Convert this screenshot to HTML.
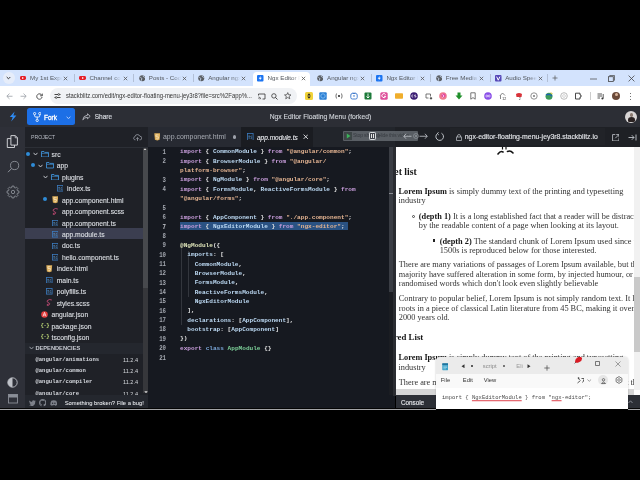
<!DOCTYPE html>
<html><head><meta charset="utf-8"><style>
*{box-sizing:border-box;margin:0;padding:0}
html,body{width:640px;height:480px;overflow:hidden;background:#000;font-family:"Liberation Sans",sans-serif}
.a{position:absolute}
.t{white-space:nowrap;line-height:1}
.tabt{top:75px;font-size:6.2px;color:#50555b;white-space:nowrap;line-height:1;width:32px;overflow:hidden;-webkit-mask-image:linear-gradient(90deg,#000 75%,transparent 100%)}
.tabx{top:74.5px;font-size:6px;color:#444;line-height:1}
.tabsep{top:74px;width:1px;height:8px;background:#a8b6cf}
.ext{top:93px;width:6px;height:6px;border-radius:1.5px}
.m{font-family:"Liberation Mono",monospace}
.cl{font-family:"Liberation Mono",monospace;font-size:6.1px;line-height:9.35px;height:9.35px;white-space:pre;color:#d4d4d4;font-weight:bold}
.ln{font-family:"Liberation Mono",monospace;font-size:5.7px;line-height:9.35px;height:9.35px;color:#a9adb5;font-weight:bold;transform:scaleY(1.25);transform-origin:0 50%;text-align:right;width:20px}
.k{color:#c89ddb}.i{color:#bcd9f3}.s{color:#e3b391}.d{color:#dde3b8}.g{color:#7ccf98}.b{color:#7aa6d8}.w{color:#e0e0e0}
.ft{font-size:6.9px;color:#c9ccd3;line-height:1}
.pv{font-family:"Liberation Serif",serif;font-size:8.3px;line-height:9.35px;color:#333;white-space:nowrap}
.pv b{color:#161616}
</style></head><body>
<div id="root" style="position:absolute;left:0;top:0;width:640px;height:480px;will-change:transform"><div class="a" style="left:0px;top:70px;width:640px;height:16.4px;background:#d3e3fd;"></div>
<div class="a" style="left:0px;top:86.4px;width:640px;height:19.6px;background:#ffffff;"></div>
<div class="a" style="left:2.5px;top:72px;width:12px;height:12px;background:#e6edfa;border-radius:50%"></div>
<svg class="a" style="left:6px;top:76px" width="5" height="4" viewBox="0 0 5 4"><path d="M0.7 1 L2.5 2.8 L4.3 1" stroke="#333" stroke-width="1" fill="none"/></svg>
<div class="a" style="left:19.8px;top:75.8px;width:6.6px;height:4.6px;background:#e5202a;border-radius:1.4px"></div>
<div class="a" style="left:22.3px;top:77px;width:0;height:0;border-left:2.2px solid #fff;border-top:1.1px solid transparent;border-bottom:1.1px solid transparent"></div>
<div class="a tabt" style="left:30.0px">My 1st Experi</div>
<svg class="a" style="left:63.2px;top:75.5px" width="5" height="5" viewBox="0 0 5 5"><path d="M0.8 0.8 L4.2 4.2 M4.2 0.8 L0.8 4.2" stroke="#555" stroke-width="0.8"/></svg>
<div class="a" style="left:73.9px;top:74px;width:0.7px;height:8px;background:#b3c0d6;"></div>
<div class="a" style="left:79.2px;top:75.8px;width:6.6px;height:4.6px;background:#e5202a;border-radius:1.4px"></div>
<div class="a" style="left:81.7px;top:77px;width:0;height:0;border-left:2.2px solid #fff;border-top:1.1px solid transparent;border-bottom:1.1px solid transparent"></div>
<div class="a tabt" style="left:89.4px">Channel cont</div>
<svg class="a" style="left:122.6px;top:75.5px" width="5" height="5" viewBox="0 0 5 5"><path d="M0.8 0.8 L4.2 4.2 M4.2 0.8 L0.8 4.2" stroke="#555" stroke-width="0.8"/></svg>
<div class="a" style="left:133.3px;top:74px;width:0.7px;height:8px;background:#b3c0d6;"></div>
<svg class="a" style="left:138.6px;top:75px" width="6.5" height="6.5" viewBox="0 0 10 10"><circle cx="5" cy="5" r="4.6" fill="#5a5e63"/><path d="M2 3.5 Q4 4 4.5 6 Q3 8 3.5 9" stroke="#d3e3fd" stroke-width="1.2" fill="none"/><path d="M6 1.5 Q7 3 8.8 4" stroke="#d3e3fd" stroke-width="1.2" fill="none"/></svg>
<div class="a tabt" style="left:148.8px">Posts - Codin</div>
<svg class="a" style="left:182.0px;top:75.5px" width="5" height="5" viewBox="0 0 5 5"><path d="M0.8 0.8 L4.2 4.2 M4.2 0.8 L0.8 4.2" stroke="#555" stroke-width="0.8"/></svg>
<div class="a" style="left:192.7px;top:74px;width:0.7px;height:8px;background:#b3c0d6;"></div>
<svg class="a" style="left:198.0px;top:75px" width="6.5" height="6.5" viewBox="0 0 10 10"><circle cx="5" cy="5" r="4.6" fill="#5a5e63"/><path d="M2 3.5 Q4 4 4.5 6 Q3 8 3.5 9" stroke="#d3e3fd" stroke-width="1.2" fill="none"/><path d="M6 1.5 Q7 3 8.8 4" stroke="#d3e3fd" stroke-width="1.2" fill="none"/></svg>
<div class="a tabt" style="left:208.2px">Angular ngx-</div>
<svg class="a" style="left:241.4px;top:75.5px" width="5" height="5" viewBox="0 0 5 5"><path d="M0.8 0.8 L4.2 4.2 M4.2 0.8 L0.8 4.2" stroke="#555" stroke-width="0.8"/></svg>
<div class="a" style="left:252.5px;top:72.4px;width:57.5px;height:14.2px;background:#fff;border-radius:4px 4px 0 0"></div>
<svg class="a" style="left:257.4px;top:75px" width="6.5" height="6.5" viewBox="0 0 10 10"><rect width="10" height="10" rx="1.5" fill="#1b74f2"/><path d="M5.8 1.5 L2.5 5.8 H4.8 L4 8.5 L7.5 4.2 H5.2 Z" fill="#fff"/></svg>
<div class="a tabt" style="left:267.6px">Ngx Editor Fl</div>
<svg class="a" style="left:300.8px;top:75.5px" width="5" height="5" viewBox="0 0 5 5"><path d="M0.8 0.8 L4.2 4.2 M4.2 0.8 L0.8 4.2" stroke="#555" stroke-width="0.8"/></svg>
<svg class="a" style="left:316.8px;top:75px" width="6.5" height="6.5" viewBox="0 0 10 10"><circle cx="5" cy="5" r="4.6" fill="#5a5e63"/><path d="M2 3.5 Q4 4 4.5 6 Q3 8 3.5 9" stroke="#d3e3fd" stroke-width="1.2" fill="none"/><path d="M6 1.5 Q7 3 8.8 4" stroke="#d3e3fd" stroke-width="1.2" fill="none"/></svg>
<div class="a tabt" style="left:327.0px">Angular ngx-</div>
<svg class="a" style="left:360.2px;top:75.5px" width="5" height="5" viewBox="0 0 5 5"><path d="M0.8 0.8 L4.2 4.2 M4.2 0.8 L0.8 4.2" stroke="#555" stroke-width="0.8"/></svg>
<div class="a" style="left:370.9px;top:74px;width:0.7px;height:8px;background:#b3c0d6;"></div>
<svg class="a" style="left:376.2px;top:75px" width="6.5" height="6.5" viewBox="0 0 10 10"><rect width="10" height="10" rx="1.5" fill="#1b74f2"/><path d="M5.8 1.5 L2.5 5.8 H4.8 L4 8.5 L7.5 4.2 H5.2 Z" fill="#fff"/></svg>
<div class="a tabt" style="left:386.4px">Ngx Editor Fl</div>
<svg class="a" style="left:419.6px;top:75.5px" width="5" height="5" viewBox="0 0 5 5"><path d="M0.8 0.8 L4.2 4.2 M4.2 0.8 L0.8 4.2" stroke="#555" stroke-width="0.8"/></svg>
<div class="a" style="left:430.3px;top:74px;width:0.7px;height:8px;background:#b3c0d6;"></div>
<svg class="a" style="left:435.6px;top:75px" width="6.5" height="6.5" viewBox="0 0 10 10"><circle cx="5" cy="5" r="4.6" fill="#5a5e63"/><path d="M2 3.5 Q4 4 4.5 6 Q3 8 3.5 9" stroke="#d3e3fd" stroke-width="1.2" fill="none"/><path d="M6 1.5 Q7 3 8.8 4" stroke="#d3e3fd" stroke-width="1.2" fill="none"/></svg>
<div class="a tabt" style="left:445.8px">Free Media T</div>
<svg class="a" style="left:479.0px;top:75.5px" width="5" height="5" viewBox="0 0 5 5"><path d="M0.8 0.8 L4.2 4.2 M4.2 0.8 L0.8 4.2" stroke="#555" stroke-width="0.8"/></svg>
<div class="a" style="left:489.7px;top:74px;width:0.7px;height:8px;background:#b3c0d6;"></div>
<svg class="a" style="left:495.0px;top:75px" width="6.5" height="6.5" viewBox="0 0 10 10"><rect width="10" height="10" rx="1.5" fill="#5547b8"/><path d="M2.5 2.5 L5 8 L7.5 2.5" stroke="#fff" stroke-width="1.5" fill="none"/></svg>
<div class="a tabt" style="left:505.2px">Audio Speec</div>
<svg class="a" style="left:538.4px;top:75.5px" width="5" height="5" viewBox="0 0 5 5"><path d="M0.8 0.8 L4.2 4.2 M4.2 0.8 L0.8 4.2" stroke="#555" stroke-width="0.8"/></svg>
<div class="a" style="left:547px;top:74px;width:0.7px;height:8px;background:#b3c0d6;"></div>
<svg class="a" style="left:552px;top:75px" width="6" height="6" viewBox="0 0 6 6"><path d="M3 0.5 V5.5 M0.5 3 H5.5" stroke="#555" stroke-width="0.7"/></svg>
<svg class="a" style="left:590px;top:77.5px" width="7" height="2" viewBox="0 0 7 2"><path d="M0 1 H7" stroke="#555" stroke-width="0.8"/></svg>
<svg class="a" style="left:608px;top:74.5px" width="7" height="7" viewBox="0 0 7 7"><rect x="0.5" y="1.7" width="4.8" height="4.8" stroke="#444" stroke-width="0.8" fill="none"/><path d="M1.7 1.2 V0.5 H6.5 V5.3 H5.8" stroke="#444" stroke-width="0.7" fill="none"/></svg>
<svg class="a" style="left:627.5px;top:74.5px" width="7" height="7" viewBox="0 0 7 7"><path d="M0.6 0.6 L6.4 6.4 M6.4 0.6 L0.6 6.4" stroke="#444" stroke-width="0.8"/></svg>
<svg class="a" style="left:5.5px;top:93px" width="7" height="6.5" viewBox="0 0 7 6.5"><path d="M6.5 3.25 H1 M3.5 0.6 L0.8 3.25 L3.5 5.9" stroke="#9aa0a6" stroke-width="0.8" fill="none"/></svg>
<svg class="a" style="left:20px;top:93px" width="7" height="6.5" viewBox="0 0 7 6.5"><path d="M0.5 3.25 H6 M3.5 0.6 L6.2 3.25 L3.5 5.9" stroke="#9aa0a6" stroke-width="0.8" fill="none"/></svg>
<svg class="a" style="left:35.5px;top:92.6px" width="7" height="7" viewBox="0 0 7 7"><path d="M5.9 2.4 A2.7 2.7 0 1 0 6.1 4" stroke="#444" stroke-width="0.9" fill="none"/><path d="M6.3 0.6 V2.8 H4.1" stroke="#444" stroke-width="0.9" fill="none"/></svg>
<div class="a" style="left:50px;top:88.2px;width:246.5px;height:15.8px;background:#f0f2f5;border-radius:8px"></div>
<svg class="a" style="left:53.5px;top:93px" width="7" height="6" viewBox="0 0 7 6"><path d="M0.5 1.5 H4 M5.5 1.5 H6.5 M0.5 4.5 H1.5 M3 4.5 H6.5" stroke="#333" stroke-width="0.9"/><circle cx="4.7" cy="1.5" r="0.9" fill="none" stroke="#333" stroke-width="0.7"/><circle cx="2.2" cy="4.5" r="0.9" fill="none" stroke="#333" stroke-width="0.7"/></svg>
<div class="a t" style="left:65.6px;top:93.2px;font-size:6.6px;color:#333;transform:scale(0.894,1.055);transform-origin:0 50%">stackblitz.com/edit/ngx-editor-floating-menu-jey3r8?file=src%2Fapp%...</div>
<svg class="a" style="left:257.5px;top:92.5px" width="8" height="7" viewBox="0 0 8 7"><path d="M0.5 2.5 V1 H7 V6 H4.5" stroke="#333" stroke-width="0.8" fill="none"/><path d="M0.5 4 A2.2 2.2 0 0 1 2.7 6.2 M0.5 5.3 A0.9 0.9 0 0 1 1.4 6.2" stroke="#333" stroke-width="0.7" fill="none"/></svg>
<svg class="a" style="left:270.5px;top:92.5px" width="7" height="7" viewBox="0 0 7 7"><circle cx="2.9" cy="2.9" r="2.2" stroke="#333" stroke-width="0.8" fill="none"/><path d="M4.5 4.5 L6.5 6.5" stroke="#333" stroke-width="0.9"/></svg>
<svg class="a" style="left:284px;top:92.2px" width="7.5" height="7.5" viewBox="0 0 10 10"><path d="M5 0.8 L6.2 3.7 L9.3 3.9 L6.9 5.9 L7.7 9 L5 7.3 L2.3 9 L3.1 5.9 L0.7 3.9 L3.8 3.7 Z" stroke="#333" stroke-width="0.9" fill="none"/></svg>
<svg class="a" style="left:304.5px;top:92.2px" width="8" height="8" viewBox="0 0 8 8"><rect x="0" y="0" width="8" height="8" rx="1.5" fill="#f1d33a"/><path d="M4 1.2 L5.8 3.4 H2.2 Z M4 6.8 L5.8 4.6 H2.2 Z" fill="#222"/></svg>
<svg class="a" style="left:319.3px;top:92.2px" width="8" height="8" viewBox="0 0 8 8"><rect x="0.3" y="0.3" width="7.4" height="7.4" rx="1" fill="#2b7fd4"/><circle cx="4" cy="4" r="2.2" fill="none" stroke="#8cc4f5" stroke-width="0.8"/></svg>
<svg class="a" style="left:334.5px;top:92.2px" width="8" height="8" viewBox="0 0 8 8"><path d="M1.5 1.5 Q0.3 4 1.5 6.5 M6.5 1.5 Q7.7 4 6.5 6.5" stroke="#666" stroke-width="0.9" fill="none"/><rect x="3" y="3" width="2" height="2" fill="#555"/></svg>
<svg class="a" style="left:349.5px;top:92.2px" width="8" height="8" viewBox="0 0 8 8"><rect x="0.8" y="1.5" width="6.4" height="5.5" rx="1.5" fill="none" stroke="#3574c9" stroke-width="0.9"/><path d="M2.5 0.3 L4 1.5 L5.5 0.3" stroke="#3574c9" stroke-width="0.7" fill="none"/><path d="M2.8 3.4 L4 5 L5.2 3.4 Z" fill="#3574c9"/></svg>
<svg class="a" style="left:364.2px;top:92.2px" width="8" height="8" viewBox="0 0 8 8"><rect x="0.5" y="0.5" width="7" height="7" rx="1" fill="#1d7a3a"/><path d="M4 1.5 V6 M2.5 4.5 L4 6 L5.5 4.5" stroke="#fff" stroke-width="0.9" fill="none"/></svg>
<svg class="a" style="left:379.5px;top:92.2px" width="8" height="8" viewBox="0 0 8 8"><rect x="0.3" y="0.3" width="7.4" height="7.4" rx="1.5" fill="#de4f9a"/><path d="M5.6 2.6 A2 2 0 1 0 5.8 4.3 H4" stroke="#fff" stroke-width="1" fill="none"/></svg>
<svg class="a" style="left:395.0px;top:92.2px" width="8" height="8" viewBox="0 0 8 8"><rect x="0" y="1.3" width="8" height="5.4" rx="0.8" fill="#f0ae2c"/></svg>
<svg class="a" style="left:409.5px;top:92.2px" width="8" height="8" viewBox="0 0 8 8"><circle cx="4" cy="4" r="3.8" fill="#3b1d73"/><path d="M3.2 3 A1.1 1.1 0 1 0 3.2 5 M6 3 H4.6 V4 H6 V5 H4.6" stroke="#fff" stroke-width="0.6" fill="none"/></svg>
<svg class="a" style="left:424.5px;top:92.2px" width="8" height="8" viewBox="0 0 8 8"><path d="M1 2 H5.5 V4.5 M1 2 V6 H3.5" stroke="#555" stroke-width="0.8" fill="none"/><path d="M6 5 V7.5 M4.8 6.3 H7.2" stroke="#333" stroke-width="0.9"/></svg>
<svg class="a" style="left:439.0px;top:92.2px" width="8" height="8" viewBox="0 0 8 8"><circle cx="4" cy="4" r="3.8" fill="#ef7a8f"/><circle cx="4.5" cy="3.5" r="2" fill="#e24aa6"/><path d="M3.5 2.5 L5 4 L3.5 5.5" stroke="#fff" stroke-width="0.7" fill="none"/></svg>
<svg class="a" style="left:454.5px;top:92.2px" width="8" height="8" viewBox="0 0 8 8"><path d="M2.5 0.5 H5.5 V3.5 H7.5 L4 7.5 L0.5 3.5 H2.5 Z" fill="#1f8f2a"/></svg>
<svg class="a" style="left:469.0px;top:92.2px" width="8" height="8" viewBox="0 0 8 8"><path d="M1.8 0.8 H6.2 V7.2 L4 5.6 L1.8 7.2 Z" stroke="#666" stroke-width="0.9" fill="none"/></svg>
<svg class="a" style="left:484.0px;top:92.2px" width="8" height="8" viewBox="0 0 8 8"><circle cx="4" cy="4" r="3.8" fill="#8a4fe8"/><path d="M1.8 4 A1 1 0 1 0 3.8 4 A1 1 0 1 0 1.8 4 M4.2 4 A1 1 0 1 0 6.2 4 A1 1 0 1 0 4.2 4" stroke="#fff" stroke-width="0.6" fill="none"/></svg>
<svg class="a" style="left:499.0px;top:92.2px" width="8" height="8" viewBox="0 0 8 8"><path d="M0.8 4 L3.5 1 L6 3.5 M1.5 3.5 V7" stroke="#666" stroke-width="0.8" fill="none"/><text x="3.3" y="7.8" font-size="3.6" fill="#333" font-family="Liberation Sans">12</text></svg>
<svg class="a" style="left:515.0px;top:92.2px" width="8" height="8" viewBox="0 0 8 8"><path d="M1 2 Q4 0 7 2 L6.5 5 H1.5 Z" fill="#d8333a"/><text x="3.8" y="8" font-size="3.6" fill="#333" font-family="Liberation Sans">2</text></svg>
<svg class="a" style="left:530.0px;top:92.2px" width="8" height="8" viewBox="0 0 8 8"><circle cx="4" cy="4" r="3.2" stroke="#777" stroke-width="0.8" fill="none"/><circle cx="4" cy="4" r="1" fill="#777"/></svg>
<svg class="a" style="left:545.0px;top:92.2px" width="8" height="8" viewBox="0 0 8 8"><circle cx="4" cy="4.3" r="3.5" fill="#3c9a5a"/><path d="M1 3 Q4 1.5 7 4" stroke="#1f5fb8" stroke-width="1.3" fill="none"/><path d="M5.5 0.8 L7.5 1.5" stroke="#e8c33a" stroke-width="1"/></svg>
<svg class="a" style="left:560.0px;top:92.2px" width="8" height="8" viewBox="0 0 8 8"><circle cx="4" cy="4" r="3.3" stroke="#aaa" stroke-width="0.8" fill="none"/><circle cx="4" cy="4" r="1.4" stroke="#bbb" stroke-width="0.6" fill="none"/></svg>
<svg class="a" style="left:574.0px;top:92.2px" width="8" height="8" viewBox="0 0 8 8"><path d="M1.5 1.2 H6 V3 H7 V5 H6 V7 H1.5 Z" stroke="#333" stroke-width="0.9" fill="none"/></svg>
<div class="a" style="left:590px;top:92px;width:0.8px;height:8px;background:#ccc;"></div>
<svg class="a" style="left:596.5px;top:92.5px" width="8" height="7" viewBox="0 0 8 7"><path d="M0.5 1 H5 M0.5 3 H5 M0.5 5 H3" stroke="#444" stroke-width="0.9"/><path d="M6.2 1 V5.5" stroke="#333" stroke-width="0.8"/><circle cx="5.4" cy="5.6" r="1" fill="#333"/></svg>
<div class="a" style="left:612px;top:91.8px;width:8px;height:8px;background:#6b4a3a;border-radius:50%"></div>
<div class="a" style="left:614.5px;top:93px;width:3px;height:3px;background:#d9b49a;border-radius:50%"></div>
<div class="a" style="left:630.3px;top:92.5px;width:1.2px;height:1.2px;background:#444;border-radius:50%"></div>
<div class="a" style="left:630.3px;top:95.5px;width:1.2px;height:1.2px;background:#444;border-radius:50%"></div>
<div class="a" style="left:630.3px;top:98.5px;width:1.2px;height:1.2px;background:#444;border-radius:50%"></div>
<div class="a" style="left:0px;top:106px;width:640px;height:20.5px;background:#2c2e35;"></div>
<svg class="a" style="left:8.6px;top:111.2px" width="8" height="11" viewBox="0 0 8 11"><path d="M5.6 0.4 L0.8 6 H3.7 L2.2 10.6 L7.4 4.6 H4.4 Z" fill="#2f8cf5"/></svg>
<div class="a" style="left:27px;top:108.3px;width:47.6px;height:16.3px;background:#1c6fe6;border-radius:2.5px"></div>
<svg class="a" style="left:32.6px;top:111.5px" width="8.4" height="10" viewBox="0 0 8.4 10"><circle cx="1.6" cy="1.6" r="1.15" stroke="#fff" stroke-width="0.85" fill="none"/><circle cx="6.8" cy="1.6" r="1.15" stroke="#fff" stroke-width="0.85" fill="none"/><circle cx="4.2" cy="8.4" r="1.15" stroke="#fff" stroke-width="0.85" fill="none"/><path d="M1.6 2.8 V3.8 Q1.6 5 2.8 5 H5.6 Q6.8 5 6.8 3.8 V2.8 M4.2 5 V7.2" stroke="#fff" stroke-width="0.85" fill="none"/></svg>
<div class="a t" style="left:44px;top:115.0px;font-size:6.5px;color:#fff;-webkit-text-stroke:0.3px #fff">Fork</div>
<svg class="a" style="left:66px;top:115.8px" width="5" height="3.5" viewBox="0 0 5 3.5"><path d="M0.6 0.8 L2.5 2.6 L4.4 0.8" stroke="#dfe9ff" stroke-width="0.8" fill="none"/></svg>
<svg class="a" style="left:81.5px;top:113.3px" width="9" height="8" viewBox="0 0 9 8"><path d="M5.5 0.8 L8.2 3.3 L5.5 5.8 V4.4 Q2.5 4.2 0.8 6.8 Q1.2 2.6 5.5 2.2 Z" stroke="#c9ccd3" stroke-width="0.8" fill="none"/></svg>
<div class="a t" style="left:94.7px;top:114.4px;font-size:6.5px;color:#d0d3d9;-webkit-text-stroke:0.2px #d0d3d9">Share</div>
<div class="a t" style="left:269.7px;top:114.2px;font-size:6.78px;color:#d5d8de;-webkit-text-stroke:0.1px #d5d8de">Ngx Editor Floating Menu (forked)</div>
<div class="a" style="left:625.3px;top:111px;width:12.2px;height:12.2px;background:#d9d6d6;border-radius:50%"></div>
<div class="a" style="left:628px;top:116.5px;width:7px;height:5.5px;background:#2a2222;border-radius:50% 50% 20% 20%"></div>
<div class="a" style="left:629.8px;top:112.5px;width:3.4px;height:4.5px;background:#8a7a70;border-radius:40%"></div>
<div class="a" style="left:0px;top:126.5px;width:25.2px;height:282px;background:#2e3038;"></div>
<svg class="a" style="left:0px;top:128px" width="24" height="24" viewBox="0 0 24 24"><path d="M10.9 7.6 H15.3 L17.4 9.7 V17.1 H10.9 Z" stroke="#dcdee2" stroke-width="0.9" fill="none"/><path d="M15.2 7.6 V9.8 H17.4" stroke="#dcdee2" stroke-width="0.7" fill="none"/><path d="M10.9 10.6 H7.3 V19.5 H14.5 V17.1" stroke="#dcdee2" stroke-width="0.9" fill="none"/></svg>
<svg class="a" style="left:6.5px;top:160px" width="13" height="13" viewBox="0 0 13 13"><circle cx="7.6" cy="5.5" r="4.1" stroke="#8f939b" stroke-width="0.9" fill="none"/><path d="M4.7 8.4 L1 12.2" stroke="#8f939b" stroke-width="1"/></svg>
<svg class="a" style="left:5.5px;top:184.5px" width="14" height="14" viewBox="0 0 14 14"><path d="M11.43 5.75 L12.91 5.95 L12.91 8.05 L11.43 8.25 L11.01 9.25 L11.92 10.43 L10.43 11.92 L9.25 11.01 L8.25 11.43 L8.05 12.91 L5.95 12.91 L5.75 11.43 L4.75 11.01 L3.57 11.92 L2.08 10.43 L2.99 9.25 L2.57 8.25 L1.09 8.05 L1.09 5.95 L2.57 5.75 L2.99 4.75 L2.08 3.57 L3.57 2.08 L4.75 2.99 L5.75 2.57 L5.95 1.09 L8.05 1.09 L8.25 2.57 L9.25 2.99 L10.43 2.08 L11.92 3.57 L11.01 4.75 Z" stroke="#8f939b" stroke-width="0.85" fill="none" stroke-linejoin="round"/><circle cx="7" cy="7" r="1.7" stroke="#8f939b" stroke-width="0.85" fill="none"/></svg>
<svg class="a" style="left:6.5px;top:377px" width="11" height="11" viewBox="0 0 11 11"><circle cx="5.5" cy="5.5" r="4.7" stroke="#bfc2c8" stroke-width="0.9" fill="none"/><path d="M5.5 0.8 A4.7 4.7 0 0 0 5.5 10.2 Z" fill="#bfc2c8"/></svg>
<svg class="a" style="left:7.5px;top:394px" width="10" height="9.5" viewBox="0 0 10 9.5"><rect x="0.5" y="0.5" width="9" height="8.5" stroke="#8a8e97" stroke-width="0.9" fill="none"/><rect x="0.5" y="0.5" width="9" height="3" fill="#8a8e97"/></svg>
<div class="a" style="left:25.2px;top:126.5px;width:122.8px;height:282px;background:#1f2127;"></div>
<div class="a t" style="left:31px;top:135.3px;font-size:5.2px;color:#b9bdc6;transform:scaleY(1.12)">PROJECT</div>
<svg class="a" style="left:133px;top:133.5px" width="9" height="7" viewBox="0 0 9 7"><path d="M2.5 5.8 H1.8 A1.6 1.6 0 0 1 1.9 2.7 A2.6 2.6 0 0 1 6.9 2.3 A1.7 1.7 0 0 1 7.2 5.8 H6.5" stroke="#9a9ea8" stroke-width="0.8" fill="none"/><path d="M4.5 6.8 V3.6 M3.3 4.8 L4.5 3.6 L5.7 4.8" stroke="#9a9ea8" stroke-width="0.8" fill="none"/></svg>
<div class="a" style="left:25.2px;top:146.6px;width:122.8px;height:0.8px;background:#2c2f36;"></div>
<div class="a" style="left:143px;top:147.5px;width:5px;height:245px;background:#36373b;"></div>
<div class="a" style="left:143px;top:150px;width:5px;height:138px;background:#47494d;"></div>
<svg class="a" style="left:143.2px;top:147.6px" width="4" height="2.5" viewBox="0 0 4 2.5"><path d="M0.3 2.2 L2 0.3 L3.7 2.2 Z" fill="#ddd"/></svg>
<svg class="a" style="left:143.5px;top:390.5px" width="4" height="2.5" viewBox="0 0 4 2.5"><path d="M0.3 0.3 L2 2.2 L3.7 0.3 Z" fill="#ddd"/></svg>
<div class="a" style="left:25.2px;top:227.8px;width:117.6px;height:11.3px;background:#3b3e50;"></div>
<div class="a" style="left:25.8px;top:151.6px;width:4px;height:4px;background:#2f8bd6;border-radius:50%"></div>
<svg class="a" style="left:32.70px;top:152.20px" width="5" height="4" viewBox="0 0 5 4"><path d="M0.5 0.8 L2.5 3 L4.5 0.8" stroke="#d0d3d8" stroke-width="0.9" fill="none"/></svg>
<svg class="a" style="left:40.70px;top:150.90px" width="8" height="6.5" viewBox="0 0 8 6.5"><path d="M0.5 0.5 H3 L3.7 1.4 H7.5 V6 H0.5 Z" stroke="#3f8fd2" stroke-width="0.9" fill="none"/><path d="M0.5 2.3 H7.5" stroke="#3f8fd2" stroke-width="0.7"/></svg>
<div class="a t" style="left:51.5px;top:151.8px;font-size:6.8px;color:#dcdfe4;-webkit-text-stroke:0.12px #dcdfe4">src</div>
<div class="a" style="left:31.0px;top:163.05px;width:4px;height:4px;background:#2f8bd6;border-radius:50%"></div>
<svg class="a" style="left:37.90px;top:163.65px" width="5" height="4" viewBox="0 0 5 4"><path d="M0.5 0.8 L2.5 3 L4.5 0.8" stroke="#d0d3d8" stroke-width="0.9" fill="none"/></svg>
<svg class="a" style="left:45.90px;top:162.35px" width="8" height="6.5" viewBox="0 0 8 6.5"><path d="M0.5 0.5 H3 L3.7 1.4 H7.5 V6 H0.5 Z" stroke="#3f8fd2" stroke-width="0.9" fill="none"/><path d="M0.5 2.3 H7.5" stroke="#3f8fd2" stroke-width="0.7"/></svg>
<div class="a t" style="left:56.7px;top:163.25px;font-size:6.8px;color:#dcdfe4;-webkit-text-stroke:0.12px #dcdfe4">app</div>
<svg class="a" style="left:43.10px;top:175.10px" width="5" height="4" viewBox="0 0 5 4"><path d="M0.5 0.8 L2.5 3 L4.5 0.8" stroke="#d0d3d8" stroke-width="0.9" fill="none"/></svg>
<svg class="a" style="left:51.10px;top:173.80px" width="8" height="6.5" viewBox="0 0 8 6.5"><path d="M0.5 0.5 H3 L3.7 1.4 H7.5 V6 H0.5 Z" stroke="#3f8fd2" stroke-width="0.9" fill="none"/><path d="M0.5 2.3 H7.5" stroke="#3f8fd2" stroke-width="0.7"/></svg>
<div class="a t" style="left:61.9px;top:174.7px;font-size:6.8px;color:#dcdfe4;-webkit-text-stroke:0.12px #dcdfe4">plugins</div>
<svg class="a" style="left:56.80px;top:185.35px" width="6.5" height="6.5" viewBox="0 0 6.5 6.5"><rect x="0.4" y="0.4" width="5.7" height="5.7" stroke="#3b7bbf" stroke-width="0.8" fill="none"/><path d="M1.3 2.6 H3 M2.15 2.6 V5.2 M5 2.8 Q4 2.2 3.8 3.1 Q3.8 3.7 4.4 3.9 Q5.2 4.3 4.3 5.1 L3.6 4.8" stroke="#5aa0e0" stroke-width="0.55" fill="none"/></svg>
<div class="a t" style="left:67.1px;top:186.15px;font-size:6.8px;color:#dcdfe4;-webkit-text-stroke:0.12px #dcdfe4">index.ts</div>
<div class="a" style="left:43.0px;top:197.4px;width:4px;height:4px;background:#2f8bd6;border-radius:50%"></div>
<svg class="a" style="left:51.60px;top:196.40px" width="6.5" height="7.5" viewBox="0 0 6.5 7.5"><path d="M0.3 0.3 H6.2 L5.6 6.4 L3.25 7.2 L0.9 6.4 Z" fill="#dcae5a"/><path d="M4.6 1.7 H1.9 L2.05 3.5 H4.4 L4.25 5.2 L3.25 5.6 L2.25 5.2" stroke="#fff4dd" stroke-width="0.6" fill="none"/></svg>
<div class="a t" style="left:61.9px;top:197.6px;font-size:6.8px;color:#dcdfe4;-webkit-text-stroke:0.12px #dcdfe4">app.component.html</div>
<svg class="a" style="left:51.60px;top:207.85px" width="6.5" height="7.5" viewBox="0 0 6.5 7.5"><path d="M5.8 1 Q3.5 -0.2 1.4 1.5 Q0.2 2.8 2.5 3.6 Q4.5 4.3 3.2 5.8 Q2.2 6.8 1 6.2 Q0.8 5.4 2.6 4.9" stroke="#d64f7e" stroke-width="0.8" fill="none"/></svg>
<div class="a t" style="left:61.9px;top:209.05px;font-size:6.8px;color:#dcdfe4;-webkit-text-stroke:0.12px #dcdfe4">app.component.scss</div>
<svg class="a" style="left:51.60px;top:219.70px" width="6.5" height="6.5" viewBox="0 0 6.5 6.5"><rect x="0.4" y="0.4" width="5.7" height="5.7" stroke="#3b7bbf" stroke-width="0.8" fill="none"/><path d="M1.3 2.6 H3 M2.15 2.6 V5.2 M5 2.8 Q4 2.2 3.8 3.1 Q3.8 3.7 4.4 3.9 Q5.2 4.3 4.3 5.1 L3.6 4.8" stroke="#5aa0e0" stroke-width="0.55" fill="none"/></svg>
<div class="a t" style="left:61.9px;top:220.5px;font-size:6.8px;color:#dcdfe4;-webkit-text-stroke:0.12px #dcdfe4">app.component.ts</div>
<svg class="a" style="left:51.60px;top:231.15px" width="6.5" height="6.5" viewBox="0 0 6.5 6.5"><rect x="0.4" y="0.4" width="5.7" height="5.7" stroke="#3b7bbf" stroke-width="0.8" fill="none"/><path d="M1.3 2.6 H3 M2.15 2.6 V5.2 M5 2.8 Q4 2.2 3.8 3.1 Q3.8 3.7 4.4 3.9 Q5.2 4.3 4.3 5.1 L3.6 4.8" stroke="#5aa0e0" stroke-width="0.55" fill="none"/></svg>
<div class="a t" style="left:61.9px;top:231.95px;font-size:6.8px;color:#dcdfe4;-webkit-text-stroke:0.12px #dcdfe4">app.module.ts</div>
<svg class="a" style="left:51.60px;top:242.60px" width="6.5" height="6.5" viewBox="0 0 6.5 6.5"><rect x="0.4" y="0.4" width="5.7" height="5.7" stroke="#3b7bbf" stroke-width="0.8" fill="none"/><path d="M1.3 2.6 H3 M2.15 2.6 V5.2 M5 2.8 Q4 2.2 3.8 3.1 Q3.8 3.7 4.4 3.9 Q5.2 4.3 4.3 5.1 L3.6 4.8" stroke="#5aa0e0" stroke-width="0.55" fill="none"/></svg>
<div class="a t" style="left:61.9px;top:243.4px;font-size:6.8px;color:#dcdfe4;-webkit-text-stroke:0.12px #dcdfe4">doc.ts</div>
<svg class="a" style="left:51.60px;top:254.05px" width="6.5" height="6.5" viewBox="0 0 6.5 6.5"><rect x="0.4" y="0.4" width="5.7" height="5.7" stroke="#3b7bbf" stroke-width="0.8" fill="none"/><path d="M1.3 2.6 H3 M2.15 2.6 V5.2 M5 2.8 Q4 2.2 3.8 3.1 Q3.8 3.7 4.4 3.9 Q5.2 4.3 4.3 5.1 L3.6 4.8" stroke="#5aa0e0" stroke-width="0.55" fill="none"/></svg>
<div class="a t" style="left:61.9px;top:254.85px;font-size:6.8px;color:#dcdfe4;-webkit-text-stroke:0.12px #dcdfe4">hello.component.ts</div>
<svg class="a" style="left:46.40px;top:265.10px" width="6.5" height="7.5" viewBox="0 0 6.5 7.5"><path d="M0.3 0.3 H6.2 L5.6 6.4 L3.25 7.2 L0.9 6.4 Z" fill="#dcae5a"/><path d="M4.6 1.7 H1.9 L2.05 3.5 H4.4 L4.25 5.2 L3.25 5.6 L2.25 5.2" stroke="#fff4dd" stroke-width="0.6" fill="none"/></svg>
<div class="a t" style="left:56.7px;top:266.3px;font-size:6.8px;color:#dcdfe4;-webkit-text-stroke:0.12px #dcdfe4">index.html</div>
<svg class="a" style="left:46.40px;top:276.95px" width="6.5" height="6.5" viewBox="0 0 6.5 6.5"><rect x="0.4" y="0.4" width="5.7" height="5.7" stroke="#3b7bbf" stroke-width="0.8" fill="none"/><path d="M1.3 2.6 H3 M2.15 2.6 V5.2 M5 2.8 Q4 2.2 3.8 3.1 Q3.8 3.7 4.4 3.9 Q5.2 4.3 4.3 5.1 L3.6 4.8" stroke="#5aa0e0" stroke-width="0.55" fill="none"/></svg>
<div class="a t" style="left:56.7px;top:277.75px;font-size:6.8px;color:#dcdfe4;-webkit-text-stroke:0.12px #dcdfe4">main.ts</div>
<svg class="a" style="left:46.40px;top:288.40px" width="6.5" height="6.5" viewBox="0 0 6.5 6.5"><rect x="0.4" y="0.4" width="5.7" height="5.7" stroke="#3b7bbf" stroke-width="0.8" fill="none"/><path d="M1.3 2.6 H3 M2.15 2.6 V5.2 M5 2.8 Q4 2.2 3.8 3.1 Q3.8 3.7 4.4 3.9 Q5.2 4.3 4.3 5.1 L3.6 4.8" stroke="#5aa0e0" stroke-width="0.55" fill="none"/></svg>
<div class="a t" style="left:56.7px;top:289.2px;font-size:6.8px;color:#dcdfe4;-webkit-text-stroke:0.12px #dcdfe4">polyfills.ts</div>
<svg class="a" style="left:46.40px;top:299.45px" width="6.5" height="7.5" viewBox="0 0 6.5 7.5"><path d="M5.8 1 Q3.5 -0.2 1.4 1.5 Q0.2 2.8 2.5 3.6 Q4.5 4.3 3.2 5.8 Q2.2 6.8 1 6.2 Q0.8 5.4 2.6 4.9" stroke="#d64f7e" stroke-width="0.8" fill="none"/></svg>
<div class="a t" style="left:56.7px;top:300.65px;font-size:6.8px;color:#dcdfe4;-webkit-text-stroke:0.12px #dcdfe4">styles.scss</div>
<svg class="a" style="left:41.20px;top:311.10px" width="7" height="7" viewBox="0 0 7 7"><circle cx="3.5" cy="3.5" r="3.3" fill="#e63b3b"/><path d="M2 5.4 L3.5 1.4 L5 5.4 M2.6 4 H4.4" stroke="#fff" stroke-width="0.7" fill="none"/></svg>
<div class="a t" style="left:51.5px;top:312.1px;font-size:6.8px;color:#dcdfe4;-webkit-text-stroke:0.12px #dcdfe4">angular.json</div>
<div class="a t" style="left:40.5px;top:322.95px;font-size:6px;color:#b5cf72;letter-spacing:-0.9px;font-family:'Liberation Mono',monospace;font-weight:bold">{-}</div>
<div class="a t" style="left:51.5px;top:323.55px;font-size:6.8px;color:#dcdfe4;-webkit-text-stroke:0.12px #dcdfe4">package.json</div>
<div class="a t" style="left:40.5px;top:334.4px;font-size:6px;color:#b5cf72;letter-spacing:-0.9px;font-family:'Liberation Mono',monospace;font-weight:bold">{-}</div>
<div class="a t" style="left:51.5px;top:335.0px;font-size:6.8px;color:#dcdfe4;-webkit-text-stroke:0.12px #dcdfe4">tsconfig.json</div>
<div class="a" style="left:25.2px;top:342.8px;width:117.6px;height:11.2px;background:#24272e;"></div>
<svg class="a" style="left:29px;top:346.3px" width="5" height="4" viewBox="0 0 5 4"><path d="M0.5 0.8 L2.5 3 L4.5 0.8" stroke="#b3b7bf" stroke-width="0.8" fill="none"/></svg>
<div class="a t" style="left:35.4px;top:345.6px;font-size:5.7px;font-weight:bold;color:#c9ccd3;letter-spacing:0px">DEPENDENCIES</div>
<div class="a t" style="left:35.4px;top:356.6px;font-family:'Liberation Mono',monospace;font-size:5.6px;color:#d3d6dc;font-weight:bold">@angular/animations</div>
<div class="a t" style="left:123px;top:357.6px;font-size:5.6px;color:#d3d6db">11.2.4</div>
<div class="a t" style="left:35.4px;top:367.9px;font-family:'Liberation Mono',monospace;font-size:5.6px;color:#d3d6dc;font-weight:bold">@angular/common</div>
<div class="a t" style="left:123px;top:368.9px;font-size:5.6px;color:#d3d6db">11.2.4</div>
<div class="a t" style="left:35.4px;top:379.2px;font-family:'Liberation Mono',monospace;font-size:5.6px;color:#d3d6dc;font-weight:bold">@angular/compiler</div>
<div class="a t" style="left:123px;top:380.2px;font-size:5.6px;color:#d3d6db">11.2.4</div>
<div class="a t" style="left:35.4px;top:390.5px;font-family:'Liberation Mono',monospace;font-size:5.6px;color:#d3d6dc;font-weight:bold">@angular/core</div>
<div class="a t" style="left:123px;top:391.5px;font-size:5.6px;color:#d3d6db">11.2.4</div>
<div class="a" style="left:25.2px;top:395.4px;width:122.8px;height:13.1px;background:#24272e;"></div>
<svg class="a" style="left:28.7px;top:399.5px" width="7" height="6" viewBox="0 0 7 6"><path d="M6.8 0.9 Q6.3 1.2 5.9 1.2 Q6.4 0.8 6.5 0.3 Q6 0.6 5.5 0.7 Q4.4 -0.2 3.3 0.7 Q3 1.2 3.2 1.9 Q1.4 1.8 0.3 0.5 Q-0.1 1.8 1 2.6 Q0.6 2.6 0.4 2.4 Q0.5 3.6 1.6 3.9 Q1.2 4 0.9 3.9 Q1.3 4.8 2.3 4.9 Q1.2 5.7 0 5.6 Q3.5 7.4 5.6 4.6 Q6.3 3.4 6.2 1.8 Q6.6 1.4 6.8 0.9 Z" fill="#7d818a"/></svg>
<svg class="a" style="left:38.6px;top:399px" width="7.5" height="7.5" viewBox="0 0 16 16"><path fill="#7d818a" d="M8 0C3.58 0 0 3.58 0 8c0 3.54 2.29 6.53 5.47 7.59.4.07.55-.17.55-.38 0-.19-.01-.82-.01-1.49-2.01.37-2.53-.49-2.69-.94-.09-.23-.48-.94-.82-1.13-.28-.15-.68-.52-.01-.53.63-.01 1.08.58 1.23.82.72 1.21 1.87.87 2.33.66.07-.52.28-.87.51-1.07-1.780-.2-3.640-.89-3.640-3.950 0-.87.31-1.59.82-2.15-.08-.2-.36-1.02.08-2.12 0 0 .67-.21 2.2.82.64-.18 1.32-.27 2-.27.68 0 1.36.09 2 .27 1.53-1.04 2.2-.82 2.2-.82.44 1.1.16 1.92.08 2.12.51.56.82 1.27.82 2.150 0 3.070-1.870 3.750-3.650 3.950.29.25.54.73.54 1.48 0 1.07-.01 1.93-.01 2.2 0 .21.15.46.55.38A8.013 8.013 0 0016 8c0-4.42-3.58-8-8-8z"/></svg>
<svg class="a" style="left:49.5px;top:399.6px" width="7.5" height="6" viewBox="0 0 7.5 6"><path d="M1.3 0.8 Q3.75 -0.1 6.2 0.8 Q7.4 2.9 7.1 5 Q6.2 5.7 5.2 5.8 L4.7 5 Q3.75 5.3 2.8 5 L2.3 5.8 Q1.3 5.7 0.4 5 Q0.1 2.9 1.3 0.8 Z" fill="#7d818a"/><circle cx="2.6" cy="3.2" r="0.7" fill="#24272e"/><circle cx="4.9" cy="3.2" r="0.7" fill="#24272e"/></svg>
<div class="a t" style="left:64.7px;top:400.8px;font-size:5.82px;color:#e6e8ec;-webkit-text-stroke:0.05px #e6e8ec">Something broken? File a bug!</div>
<div class="a" style="left:148px;top:126.5px;width:247px;height:20.5px;background:#22252b;"></div>
<div class="a" style="left:148px;top:126.5px;width:92.5px;height:20.5px;background:#272a32;"></div>
<div class="a" style="left:240.7px;top:126.5px;width:72px;height:20.5px;background:#1a1c21;"></div>
<svg class="a" style="left:153.8px;top:132.8px" width="6.5" height="8" viewBox="0 0 6.5 8"><path d="M0.3 0.3 H6.2 L5.6 6.8 L3.25 7.6 L0.9 6.8 Z" fill="#dcae5a"/><path d="M4.6 1.9 H1.9 L2.05 3.8 H4.4 L4.25 5.6 L3.25 6 L2.25 5.6" stroke="#fff4dd" stroke-width="0.6" fill="none"/></svg>
<div class="a t" style="left:163px;top:134.4px;font-size:6.95px;color:#a9adb5">app.component.html</div>
<div class="a" style="left:232.8px;top:135.3px;width:3.4px;height:3.4px;background:#9da1aa;border-radius:50%"></div>
<svg class="a" style="left:247px;top:132.6px" width="6.5" height="7.8" viewBox="0 0 6.5 7.8"><rect x="0.4" y="0.4" width="5.7" height="7" stroke="#3b7bbf" stroke-width="0.8" fill="none"/><path d="M1.3 3 H3 M2.15 3 V6 M5 3.2 Q4 2.6 3.8 3.5 Q3.8 4.1 4.4 4.3 Q5.2 4.8 4.3 5.8 L3.6 5.4" stroke="#5aa0e0" stroke-width="0.55" fill="none"/></svg>
<div class="a t" style="left:257px;top:134.9px;font-size:6.5px;color:#eceef2;font-style:italic;-webkit-text-stroke:0.1px #eceef2">app.module.ts</div>
<svg class="a" style="left:302.8px;top:134px" width="5.5" height="5.5" viewBox="0 0 5.5 5.5"><path d="M0.6 0.6 L4.9 4.9 M4.9 0.6 L0.6 4.9" stroke="#e6e8ec" stroke-width="0.9"/></svg>
<div class="a" style="left:148px;top:147px;width:247px;height:262px;background:#161920;"></div>
<div class="a" style="left:388.5px;top:147px;width:6.5px;height:248px;background:#1b1d22;"></div>
<div class="a" style="left:388.7px;top:147px;width:6.2px;height:145px;background:#3a3d44;"></div>
<div class="a" style="left:388.7px;top:192.6px;width:6.2px;height:0.8px;background:#8a8d93;"></div>
<div class="a" style="left:180px;top:221.8px;width:167.9px;height:8.6px;background:#2a5283;"></div>
<div class="a" style="left:180.6px;top:241.825px;width:0.7px;height:83.14999999999999px;background:#33363d;"></div>
<div class="a" style="left:187.9px;top:251.17499999999998px;width:0.7px;height:45.75px;background:#33363d;"></div>
<div class="a ln" style="left:146px;top:147.82px;color:#a4a8b0">1</div>
<div class="a cl" style="left:180px;top:147.32px"><span class="k">import</span><span class="w"> { </span><span class="i">CommonModule</span><span class="w"> } </span><span class="k">from</span><span class="w"> </span><span class="s">&quot;@angular/common&quot;</span><span class="w">;</span></div>
<div class="a ln" style="left:146px;top:157.17px;color:#a4a8b0">2</div>
<div class="a cl" style="left:180px;top:156.67px"><span class="k">import</span><span class="w"> { </span><span class="i">BrowserModule</span><span class="w"> } </span><span class="k">from</span><span class="w"> </span><span class="s">&quot;@angular/</span></div>
<div class="a cl" style="left:180px;top:166.02px"><span class="s">platform-browser&quot;</span><span class="w">;</span></div>
<div class="a ln" style="left:146px;top:175.88px;color:#a4a8b0">3</div>
<div class="a cl" style="left:180px;top:175.38px"><span class="k">import</span><span class="w"> { </span><span class="i">NgModule</span><span class="w"> } </span><span class="k">from</span><span class="w"> </span><span class="s">&quot;@angular/core&quot;</span><span class="w">;</span></div>
<div class="a ln" style="left:146px;top:185.22px;color:#a4a8b0">4</div>
<div class="a cl" style="left:180px;top:184.72px"><span class="k">import</span><span class="w"> { </span><span class="i">FormsModule</span><span class="w">, </span><span class="i">ReactiveFormsModule</span><span class="w"> } </span><span class="k">from</span></div>
<div class="a cl" style="left:180px;top:194.07px"><span class="s">&quot;@angular/forms&quot;</span><span class="w">;</span></div>
<div class="a ln" style="left:146px;top:203.92px;color:#a4a8b0">5</div>
<div class="a ln" style="left:146px;top:213.27px;color:#a4a8b0">6</div>
<div class="a cl" style="left:180px;top:212.77px"><span class="k">import</span><span class="w"> { </span><span class="i">AppComponent</span><span class="w"> } </span><span class="k">from</span><span class="w"> </span><span class="s">&quot;./app.component&quot;</span><span class="w">;</span></div>
<div class="a ln" style="left:146px;top:222.62px;color:#c9ccd2">7</div>
<div class="a cl" style="left:180px;top:222.12px"><span class="k">import</span><span class="w"> { </span><span class="i">NgxEditorModule</span><span class="w"> } </span><span class="k">from</span><span class="w"> </span><span class="s">&quot;ngx-editor&quot;</span><span class="w">;</span></div>
<div class="a ln" style="left:146px;top:231.97px;color:#a4a8b0">8</div>
<div class="a ln" style="left:146px;top:241.32px;color:#a4a8b0">9</div>
<div class="a cl" style="left:180px;top:240.82px"><span class="d">@NgModule</span><span class="w">({</span></div>
<div class="a ln" style="left:146px;top:250.67px;color:#a4a8b0">10</div>
<div class="a cl" style="left:180px;top:250.17px"><span class="w">  </span><span class="i">imports</span><span class="w">: [</span></div>
<div class="a ln" style="left:146px;top:260.02px;color:#a4a8b0">11</div>
<div class="a cl" style="left:180px;top:259.52px"><span class="w">    </span><span class="i">CommonModule</span><span class="w">,</span></div>
<div class="a ln" style="left:146px;top:269.38px;color:#a4a8b0">12</div>
<div class="a cl" style="left:180px;top:268.88px"><span class="w">    </span><span class="i">BrowserModule</span><span class="w">,</span></div>
<div class="a ln" style="left:146px;top:278.73px;color:#a4a8b0">13</div>
<div class="a cl" style="left:180px;top:278.23px"><span class="w">    </span><span class="i">FormsModule</span><span class="w">,</span></div>
<div class="a ln" style="left:146px;top:288.07px;color:#a4a8b0">14</div>
<div class="a cl" style="left:180px;top:287.57px"><span class="w">    </span><span class="i">ReactiveFormsModule</span><span class="w">,</span></div>
<div class="a ln" style="left:146px;top:297.42px;color:#a4a8b0">15</div>
<div class="a cl" style="left:180px;top:296.92px"><span class="w">    </span><span class="i">NgxEditorModule</span></div>
<div class="a ln" style="left:146px;top:306.77px;color:#a4a8b0">16</div>
<div class="a cl" style="left:180px;top:306.27px"><span class="w">  ],</span></div>
<div class="a ln" style="left:146px;top:316.12px;color:#a4a8b0">17</div>
<div class="a cl" style="left:180px;top:315.62px"><span class="w">  </span><span class="i">declarations</span><span class="w">: [</span><span class="i">AppComponent</span><span class="w">],</span></div>
<div class="a ln" style="left:146px;top:325.48px;color:#a4a8b0">18</div>
<div class="a cl" style="left:180px;top:324.98px"><span class="w">  </span><span class="i">bootstrap</span><span class="w">: [</span><span class="i">AppComponent</span><span class="w">]</span></div>
<div class="a ln" style="left:146px;top:334.82px;color:#a4a8b0">19</div>
<div class="a cl" style="left:180px;top:334.32px"><span class="w">})</span></div>
<div class="a ln" style="left:146px;top:344.17px;color:#a4a8b0">20</div>
<div class="a cl" style="left:180px;top:343.67px"><span class="k">export</span><span class="w"> </span><span class="b">class</span><span class="w"> </span><span class="g">AppModule</span><span class="w"> {}</span></div>
<div class="a ln" style="left:146px;top:353.52px;color:#a4a8b0">21</div>
<div class="a" style="left:395px;top:126.5px;width:245px;height:20px;background:#1e2025;"></div>
<div class="a" style="left:450px;top:128px;width:155px;height:17px;background:#212328;"></div>
<svg class="a" style="left:434.5px;top:132.3px" width="9.5" height="9.5" viewBox="0 0 10 10"><path d="M6.8 1.3 A4 4 0 1 1 2.6 1.6" stroke="#c8ccd2" stroke-width="1" fill="none"/><path d="M3.8 0.3 L2.4 1.6 L3.9 3" stroke="#c8ccd2" stroke-width="1" fill="none"/></svg>
<svg class="a" style="left:455.5px;top:133.5px" width="6" height="7" viewBox="0 0 6 7"><rect x="0.6" y="3" width="4.8" height="3.5" stroke="#b0b4ba" stroke-width="0.8" fill="none"/><path d="M1.5 3 V2 A1.5 1.5 0 0 1 4.5 2 V3" stroke="#b0b4ba" stroke-width="0.8" fill="none"/></svg>
<div class="a t" style="left:464.8px;top:133.6px;font-size:6.88px;color:#e0e2e6;-webkit-text-stroke:0.15px #e0e2e6">ngx-editor-floating-menu-jey3r8.stackblitz.io</div>
<svg class="a" style="left:611.8px;top:133.6px" width="7.5" height="7.5" viewBox="0 0 8 8"><path d="M3.5 0.6 H0.6 V7.4 H7.4 V4.5" stroke="#c0c4ca" stroke-width="0.9" fill="none"/><path d="M4.5 0.6 H7.4 V3.5 M7.4 0.6 L3.5 4.5" stroke="#c0c4ca" stroke-width="0.9" fill="none"/></svg>
<svg class="a" style="left:627.5px;top:133.8px" width="9" height="7" viewBox="0 0 9 7"><path d="M0.5 3.5 H6 M3.8 1.2 L6 3.5 L3.8 5.8 M8 0.5 V6.5" stroke="#c0c4ca" stroke-width="0.9" fill="none"/></svg>
<div class="a" style="left:342.8px;top:130.8px;width:75.2px;height:9.9px;background:rgba(125,130,137,0.62);border-radius:1px"></div>
<div class="a" style="left:343.6px;top:131.5px;width:8.2px;height:8.5px;background:rgba(40,50,45,.55);"></div>
<svg class="a" style="left:345.5px;top:132.8px" width="5" height="6" viewBox="0 0 5 6"><path d="M0.8 0.5 L4.5 3 L0.8 5.5 Z" fill="#3cb35a"/></svg>
<div class="a t" style="left:353px;top:133.3px;font-size:5.2px;color:#2a2e33;opacity:.75;letter-spacing:-0.2px">Stop sharing</div>
<div class="a" style="left:369px;top:131.6px;width:7px;height:8.4px;background:rgba(60,64,70,.8);border:0.7px solid #d8dadd;border-radius:1.2px"></div>
<div class="a" style="left:371.2px;top:133.5px;width:0.8px;height:4.6px;background:#e6e6e6;"></div>
<div class="a" style="left:373.2px;top:133.5px;width:0.8px;height:4.6px;background:#e6e6e6;"></div>
<div class="a t" style="left:378px;top:133.3px;font-size:5.2px;color:#2a2e33;opacity:.7;letter-spacing:-0.2px">Hide this video</div>
<svg class="a" style="left:402.5px;top:133px" width="9" height="6.5" viewBox="0 0 9 6.5"><path d="M8.5 3.25 H0.8 M3 0.8 L0.8 3.25 L3 5.7" stroke="#c8ccd2" stroke-width="0.8" fill="none"/></svg>
<svg class="a" style="left:412.5px;top:133px" width="6" height="6" viewBox="0 0 6 6"><circle cx="3" cy="3" r="2.5" stroke="#9aa0a6" stroke-width="0.6" fill="none"/><path d="M1.8 1.8 L4.2 4.2 M4.2 1.8 L1.8 4.2" stroke="#9aa0a6" stroke-width="0.6"/></svg>
<svg class="a" style="left:419px;top:133px" width="9" height="6.5" viewBox="0 0 9 6.5"><path d="M0.5 3.25 H8.2 M6 0.8 L8.2 3.25 L6 5.7" stroke="#c8ccd2" stroke-width="0.8" fill="none"/></svg>
<div class="a" id="pv" style="left:395.5px;top:146.5px;width:244.5px;height:249px;background:#fff;overflow:hidden"><svg class="a" style="left:101px;top:0px" width="18" height="9" viewBox="0 0 18 9"><path d="M1 7 Q3.5 3.5 6 5 M10.5 4.5 Q13.5 3 16 6" stroke="#111" stroke-width="1.6" fill="none" stroke-linecap="round"/><path d="M5.5 0 V2.5 M9 0 V2.5" stroke="#111" stroke-width="1.2"/></svg><div class="a pv" style="left:-1.15px;top:20.68px;font-size:9.7px;line-height:9.7px;font-weight:bold;color:#111"><b>et list</b></div><div class="a pv" style="left:3.00px;top:40.62px"><b>Lorem Ipsum</b> is simply dummy text of the printing and typesetting</div><div class="a pv" style="left:3.00px;top:49.82px">industry</div><div class="a" style="left:16.10px;top:68.10px;width:3.2px;height:3.2px;border:0.6px solid #444;border-radius:50%"></div><div class="a pv" style="left:23.30px;top:65.62px"><b>(depth 1)</b> It is a long established fact that a reader will be distracted</div><div class="a pv" style="left:23.30px;top:74.82px">by the readable content of a page when looking at its layout.</div><div class="a" style="left:37.20px;top:92.80px;width:2.6px;height:2.6px;background:#222"></div><div class="a pv" style="left:44.20px;top:90.02px"><b>(depth 2)</b> The standard chunk of Lorem Ipsum used since the</div><div class="a pv" style="left:44.20px;top:99.12px">1500s is reproduced below for those interested.</div><div class="a pv" style="left:3.25px;top:113.72px">There are many variations of passages of Lorem Ipsum available, but the</div><div class="a pv" style="left:3.25px;top:123.02px">majority have suffered alteration in some form, by injected humour, or</div><div class="a pv" style="left:3.25px;top:132.42px">randomised words which don't look even slightly believable</div><div class="a pv" style="left:3.25px;top:147.82px">Contrary to popular belief, Lorem Ipsum is not simply random text. It has</div><div class="a pv" style="left:3.25px;top:157.02px">roots in a piece of classical Latin literature from 45 BC, making it over</div><div class="a pv" style="left:3.25px;top:166.22px">2000 years old.</div><div class="a pv" style="left:-1.63px;top:186.63px;font-size:8.8px;line-height:8.8px;font-weight:bold;color:#111"><b>red List</b></div><div class="a pv" style="left:3.00px;top:206.82px"><b>Lorem Ipsum</b> is simply dummy text of the printing and typesetting</div><div class="a pv" style="left:3.00px;top:216.32px">industry</div><div class="a pv" style="left:3.25px;top:231.52px">There are many variations of passages of Lorem Ipsum available, but the</div></div>
<div class="a" style="left:393px;top:146.5px;width:2.5px;height:249px;background:#2a2c31;"></div>
<div class="a" style="left:633.8px;top:146.5px;width:6.2px;height:243px;background:#f1f1f1;"></div>
<div class="a" style="left:633.8px;top:277px;width:6.2px;height:74.7px;background:#c9c9c9;"></div>
<div class="a" style="left:395.5px;top:389px;width:238px;height:6.4px;background:#d6d6d6;"></div>
<div class="a" style="left:395.5px;top:395.4px;width:244.5px;height:13.1px;background:#2c2f36;"></div>
<div class="a t" style="left:401px;top:400.1px;font-size:6.3px;color:#e2e4e8;-webkit-text-stroke:0.15px #e2e4e8">Console</div>
<svg class="a" style="left:628px;top:399.5px" width="5" height="3.5" viewBox="0 0 5 3.5"><path d="M0.5 3 L2.5 0.8 L4.5 3" stroke="#9a9ea8" stroke-width="0.8" fill="none"/></svg>
<div class="a" style="left:435.8px;top:356.5px;width:192.3px;height:52.9px;overflow:hidden;border-radius:4px 4px 0 0;box-shadow:0 0 2px rgba(0,0,0,.25)"><div class="a" style="left:0;top:0;width:192.5px;height:17px;background:#ebebeb"></div><div class="a" style="left:0;top:17px;width:192.5px;height:14.3px;background:#f9f9f9"></div><div class="a" style="left:0;top:31.3px;width:192.5px;height:30px;background:#fff"></div><svg class="a" style="left:5.8px;top:6.5px" width="6.5" height="7.5" viewBox="0 0 6.5 7.5"><rect x="0.3" y="0.6" width="5.9" height="6.6" rx="0.6" fill="#3aa0c8"/><rect x="0.3" y="0.3" width="5.9" height="1.6" fill="#1f6f99"/><path d="M1.3 3.2 H5.2 M1.3 4.5 H5.2 M1.3 5.8 H4" stroke="#c8ecf5" stroke-width="0.5"/></svg><svg class="a" style="left:25px;top:7.2px" width="4" height="4.5" viewBox="0 0 4 4.5"><path d="M3.5 0.3 L0.5 2.25 L3.5 4.2 Z" fill="#333"/></svg><div class="a" style="left:35.5px;top:8.8px;width:1.3px;height:1.3px;background:#444;border-radius:50%"></div><div class="a t" style="left:47px;top:7px;font-size:5.8px;color:#8a8a8a">script</div><div class="a" style="left:67.5px;top:8.6px;width:1.8px;height:1.8px;background:#555;border-radius:50%"></div><div class="a t" style="left:80.5px;top:7px;font-size:5.8px;color:#999">Eli</div><svg class="a" style="left:91px;top:7.2px" width="4" height="4.5" viewBox="0 0 4 4.5"><path d="M0.5 0.3 L3.5 2.25 L0.5 4.2 Z" fill="#333"/></svg><svg class="a" style="left:108px;top:8px" width="6" height="6" viewBox="0 0 6 6"><path d="M3 0.3 V5.7 M0.3 3 H5.7" stroke="#444" stroke-width="0.7"/></svg><svg class="a" style="left:138.5px;top:-0.5px" width="9" height="8" viewBox="0 0 9 8"><path d="M1.2 6.5 Q0.5 3 3.8 1.2 Q7.2 0 8 2.2 Q8.3 5 5 6.3 Q2.8 7.2 1.2 6.5 Z" fill="#d91b24"/><path d="M0.5 7.5 L2 6" stroke="#333" stroke-width="0.6"/></svg><div class="a" style="left:159px;top:4.8px;width:5px;height:5px;border:0.6px solid #777;border-radius:0.8px"></div><svg class="a" style="left:179px;top:4.5px" width="6" height="6" viewBox="0 0 6 6"><path d="M0.5 0.5 L5.5 5.5 M5.5 0.5 L0.5 5.5" stroke="#666" stroke-width="0.6"/></svg><div class="a t" style="left:5px;top:21px;font-size:5.8px;color:#333">File</div><div class="a t" style="left:27px;top:21px;font-size:5.8px;color:#333">Edit</div><div class="a t" style="left:48px;top:21px;font-size:5.8px;color:#333">View</div><svg class="a" style="left:141px;top:20px" width="8" height="7" viewBox="0 0 8 7"><path d="M1.5 1 L2.5 3 M0.5 6 L3.5 3.5 M4.5 1.5 L7 1.5 M5.5 5.5 Q7 4 6.5 2.5" stroke="#333" stroke-width="0.8" fill="none"/><circle cx="1.5" cy="1" r="0.8" fill="#333"/></svg><svg class="a" style="left:151.5px;top:22px" width="4.5" height="3" viewBox="0 0 4.5 3"><path d="M0.4 0.5 L2.25 2.3 L4.1 0.5" stroke="#666" stroke-width="0.6" fill="none"/></svg><div class="a" style="left:162.5px;top:18.8px;width:10px;height:10px;border-radius:50%;background:#e6e6e6"></div><svg class="a" style="left:165px;top:21px" width="5" height="6" viewBox="0 0 5 6"><circle cx="2.5" cy="1.8" r="1.2" stroke="#333" stroke-width="0.6" fill="none"/><path d="M0.5 5.5 Q2.5 2.5 4.5 5.5 Z" stroke="#333" stroke-width="0.6" fill="none"/></svg><svg class="a" style="left:179px;top:19.8px" width="8" height="8" viewBox="0 0 8 8"><path d="M4 0.6 L6.9 2.3 V5.7 L4 7.4 L1.1 5.7 V2.3 Z" stroke="#444" stroke-width="0.7" fill="none"/><circle cx="4" cy="4" r="1.3" stroke="#444" stroke-width="0.6" fill="none"/></svg><div class="a" style="left:6.25px;top:37.3px;font-family:'Liberation Mono',monospace;font-size:5.54px;line-height:8px;white-space:pre;color:#4a4a4a;transform:scaleY(1.08);transform-origin:0 50%">import { <span style="text-decoration:underline #e0505a;text-decoration-thickness:0.6px;text-underline-offset:0.6px">NgxEditorModule</span> } from "<span style="text-decoration:underline #e0505a;text-decoration-thickness:0.6px;text-underline-offset:0.6px">ngx</span>-editor";</div></div>
<div class="a" style="left:0px;top:408px;width:435.8px;height:0.7px;background:#050505;"></div>
<div class="a" style="left:628px;top:408px;width:12px;height:0.7px;background:#050505;"></div>
<div class="a" style="left:0px;top:408.7px;width:435.8px;height:1.4px;background:#a3a4a7;"></div>
<div class="a" style="left:628px;top:408.7px;width:12px;height:1.4px;background:#a3a4a7;"></div></div>
</body></html>
